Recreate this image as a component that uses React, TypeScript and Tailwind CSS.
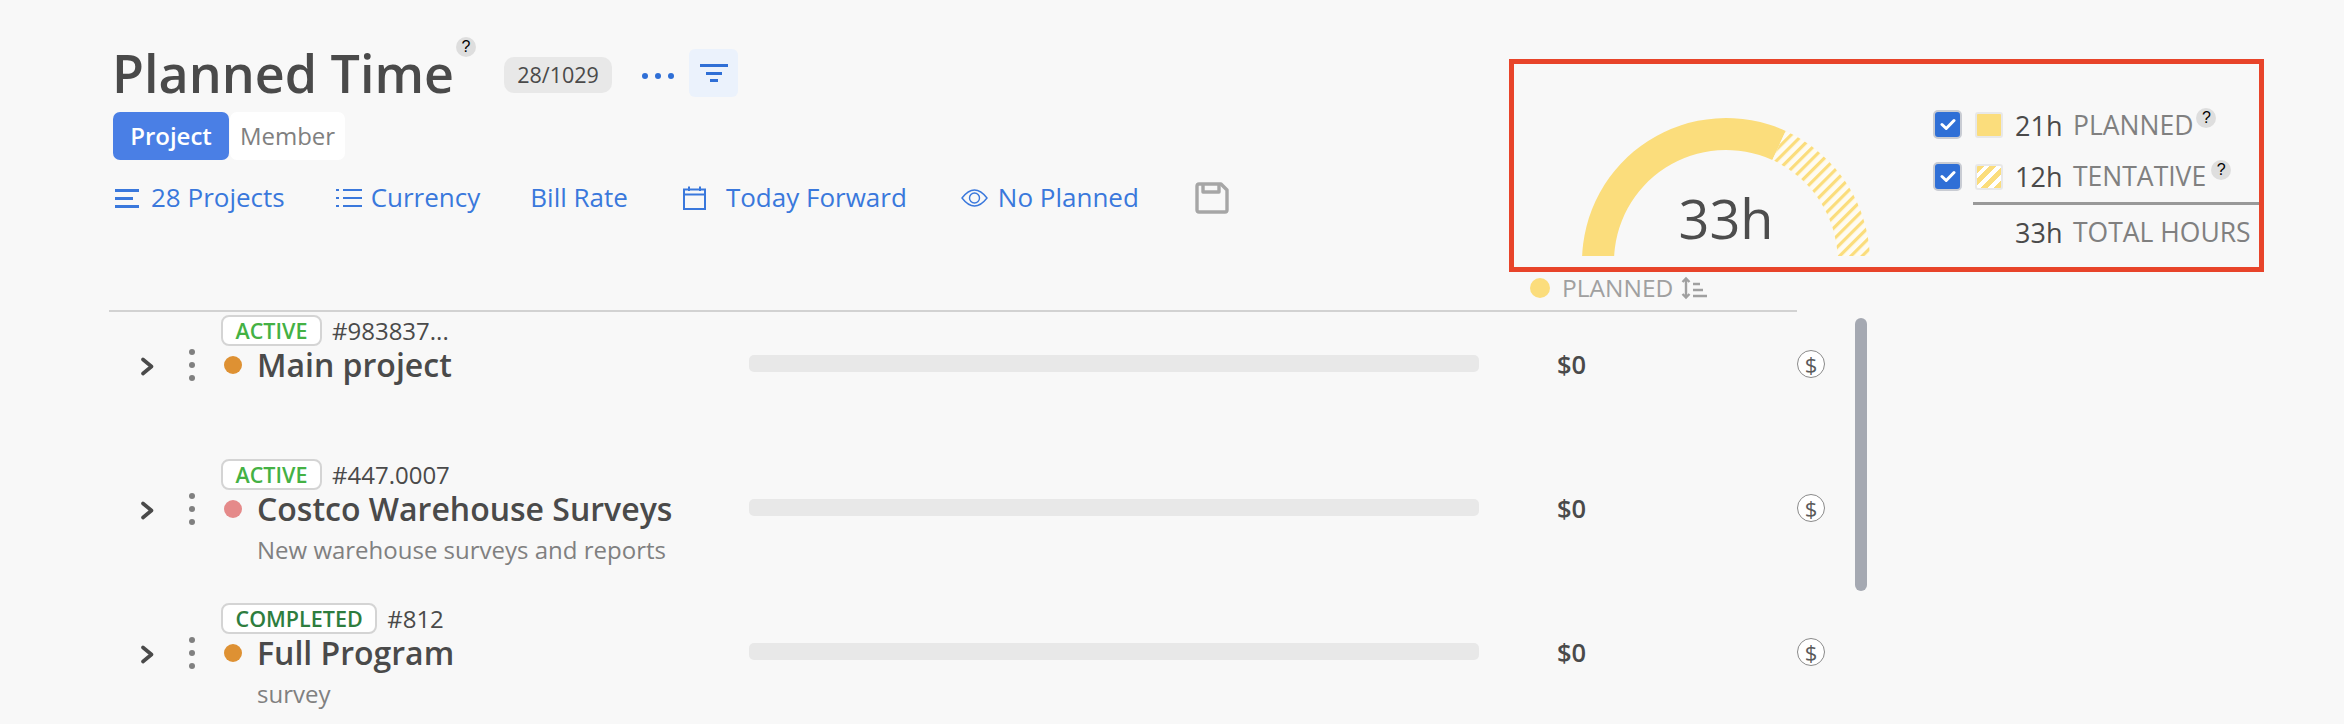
import React from "react";

const F = { fontFamily: '"Open Sans", "Noto Sans", sans-serif' };

function Help({ className = "" }: { className?: string }) {
  return (
    <span className={`flex h-[20px] w-[20px] items-center justify-center rounded-full bg-[#dedede] text-[16px] font-medium leading-none text-black ${className}`} style={{ fontFamily: '"Liberation Sans", sans-serif' }}>
      ?
    </span>
  );
}

function Check() {
  return (
    <span className="flex h-[29px] w-[29px] shrink-0 items-center justify-center rounded-[5px] border-2 border-[#c9ccd3] bg-[#2f6fd6]">
      <svg width="16" height="13" viewBox="0 0 16 13" fill="none">
        <path d="M2 6.5 L6.2 10.5 L14 2.5" stroke="#fff" strokeWidth="3" strokeLinecap="round" strokeLinejoin="round" />
      </svg>
    </span>
  );
}

function Filter({ icon, text, ml }: { icon?: React.ReactNode; text: string; ml: string }) {
  return (
    <div className={`flex items-center ${ml}`}>
      {icon}
      <span className="mt-[-2px] text-[26px] leading-[34px] text-[#3a78dc]">{text}</span>
    </div>
  );
}

function Gauge() {
  return (
    <div className="relative h-[203px] w-[368px] shrink-0">
      <svg width="368" height="203" viewBox="4 1 368 203">
        <defs>
          <pattern id="hatch" width="8" height="8" patternUnits="userSpaceOnUse" patternTransform="rotate(45)">
            <rect width="8" height="8" fill="#fefbf2" />
            <rect width="3.2" height="8" fill="#fbdd7c" />
          </pattern>
          <clipPath id="base">
            <rect x="0" y="0" width="372" height="193" />
          </clipPath>
        </defs>
        <g clipPath="url(#base)">
          <path d="M72 199 A144 144 0 0 1 275.7 68 L262.4 97.1 A112 112 0 0 0 104 199 Z" fill="#fbdd7c" />
          <path d="M275.7 68 A144 144 0 0 1 360 199 L328 199 A112 112 0 0 0 262.4 97.1 Z" fill="url(#hatch)" />
        </g>
      </svg>
      <span className="absolute left-[212px] top-[125px] -translate-x-1/2 text-[54px] leading-[58px] text-[#4d4d4d]">33h</span>
    </div>
  );
}

function Row({ badge, badgeColor, num, title, desc, dot }: { badge: string; badgeColor: string; num: string; title: string; desc?: string; dot: string }) {
  return (
    <div className="flex h-[144px] shrink-0 items-start pl-[140px] pt-[2px]">
      <svg className="mt-[43px] shrink-0" width="15" height="19" viewBox="0 0 15 19" fill="none">
        <path d="M3 2.5 L11.5 9.5 L3 16.5" stroke="#4a4a4a" strokeWidth="3.6" strokeLinecap="round" strokeLinejoin="round" />
      </svg>
      <div className="ml-[34px] mt-[35px] flex w-[6px] shrink-0 flex-col gap-[7px]">
        <span className="h-[6px] w-[6px] rounded-full bg-[#808080]" />
        <span className="h-[6px] w-[6px] rounded-full bg-[#808080]" />
        <span className="h-[6px] w-[6px] rounded-full bg-[#808080]" />
      </div>
      <div className="ml-[26px] w-[528px] shrink-0">
        <div className="flex h-[33px] items-center">
          <span className={`flex h-[31px] items-center rounded-[8px] border-2 border-[#d4d4d4] bg-white px-[12.5px] text-[21.5px] font-semibold leading-none ${badgeColor}`}>{badge}</span>
          <span className="ml-[10px] text-[24px] leading-none text-[#4a4a4a]">{num}</span>
        </div>
        <div className="flex h-[36px] items-center">
          <span className={`ml-[3px] h-[18px] w-[18px] shrink-0 rounded-full ${dot}`} />
          <span className="ml-[15px] mt-[-1px] text-[32px] font-semibold leading-[36px] text-[#4a4a4a]">{title}</span>
        </div>
        {desc && <div className="ml-[36px] mt-[9px] text-[24px] leading-[28px] text-[#808080]">{desc}</div>}
      </div>
      <div className="mt-[41px] h-[17px] w-[730px] shrink-0 rounded-[5px] bg-[#e8e8e8]" />
      <span className="ml-[78px] mt-[33px] w-[240px] shrink-0 text-[25.5px] font-semibold leading-[34px] text-[#4a4a4a]">$0</span>
      <span className="mt-[36px] flex h-[28px] w-[28px] shrink-0 items-center justify-center rounded-full border border-[#8a8a8a] bg-white text-[22px] leading-none text-[#5a5a5a]">$</span>
    </div>
  );
}

export default function App() {
  return (
    <div className="relative h-[724px] overflow-hidden bg-[#f8f8f8]" style={F}>
      <div className="flex h-[272px] items-start justify-between pl-[113px] pr-[80px]">
        <div className="pt-[37px]">
          <div className="flex h-[60px] items-start">
            <h1 className="ml-[-1px] mt-[6px] text-[52px] font-semibold leading-[60px] text-[#4a4a4a]">Planned Time</h1>
            <Help className="ml-[2px]" />
            <span className="ml-[28px] mt-[20px] flex h-[36px] w-[108px] items-center justify-center rounded-[10px] bg-[#e8e8e8] text-[21.5px] leading-none text-[#4a4a4a]">28/1029</span>
            <div className="ml-[30px] mt-[36px] flex gap-[7px]">
              <span className="h-[6px] w-[6px] rounded-full bg-[#2f6fd6]" />
              <span className="h-[6px] w-[6px] rounded-full bg-[#2f6fd6]" />
              <span className="h-[6px] w-[6px] rounded-full bg-[#2f6fd6]" />
            </div>
            <span className="ml-[15px] mt-[12px] flex h-[48px] w-[49px] items-center justify-center rounded-[6px] bg-[#ebf2fc]">
              <svg width="28" height="20" viewBox="0 0 28 20" fill="#2f6fd6">
                <rect x="0" y="1" width="28" height="3" />
                <rect x="6" y="9" width="16" height="3" />
                <rect x="10" y="16" width="8" height="3" />
              </svg>
            </span>
          </div>
          <div className="mt-[15px] flex h-[48px]">
            <span className="flex w-[116px] items-center justify-center rounded-[7px] bg-[#4a7fe5] text-[24px] font-semibold text-white">Project</span>
            <span className="ml-px flex w-[115px] items-center justify-center rounded-[7px] bg-white text-[24px] text-[#808080]">Member</span>
          </div>
          <div className="mt-[21px] flex h-[34px] items-center">
            <Filter
              ml="ml-[2px]"
              text="28 Projects"
              icon={
                <svg className="mr-[12px]" width="24" height="20" viewBox="0 0 24 20" fill="#3a78dc">
                  <rect x="0" y="1" width="24" height="3" />
                  <rect x="0" y="9" width="18" height="3" />
                  <rect x="0" y="17" width="24" height="3" />
                </svg>
              }
            />
            <Filter
              ml="ml-[51px]"
              text="Currency"
              icon={
                <svg className="mr-[9px]" width="26" height="20" viewBox="0 0 26 20" fill="#3a78dc">
                  <rect x="0" y="1" width="3" height="2" />
                  <rect x="0" y="9" width="3" height="2" />
                  <rect x="0" y="17" width="3" height="2" />
                  <rect x="7" y="1" width="19" height="2" />
                  <rect x="7" y="9" width="19" height="2" />
                  <rect x="7" y="17" width="19" height="2" />
                </svg>
              }
            />
            <Filter ml="ml-[50px]" text="Bill Rate" />
            <Filter
              ml="ml-[55px]"
              text="Today Forward"
              icon={
                <svg className="mr-[20px]" width="23" height="24" viewBox="0 0 23 24" fill="none" stroke="#3a78dc" strokeWidth="2">
                  <rect x="1" y="3.5" width="21" height="19.5" />
                  <path d="M1 8.5 H22 M6 0.5 V5 M17 0.5 V5" />
                </svg>
              }
            />
            <Filter
              ml="ml-[54px]"
              text="No Planned"
              icon={
                <svg className="mr-[10px]" width="27" height="18" viewBox="0 0 27 18" fill="none" stroke="#3a78dc" strokeWidth="1.4">
                  <path d="M1 9 C6 2.5 10 1 13.5 1 C17 1 21 2.5 26 9 C21 15.5 17 17 13.5 17 C10 17 6 15.5 1 9 Z" />
                  <circle cx="13.5" cy="9" r="5" />
                </svg>
              }
            />
            <svg className="ml-[56px]" width="34" height="32" viewBox="0 0 34 32" fill="none" stroke="#a6a6a6" strokeWidth="3.4" strokeLinejoin="round">
              <path d="M2 4 Q2 2 4 2 H26 L32 8 V28 Q32 30 30 30 H4 Q2 30 2 28 Z" />
              <path d="M8 2 V10 H24 V2" />
            </svg>
          </div>
        </div>

        <div className="mt-[59px] flex h-[213px] w-[755px] shrink-0 border-[5px] border-[#e8442a]">
          <Gauge />
          <div className="ml-[51px] flex-1 pt-[46px]">
            <div className="flex h-[29px] items-center">
              <Check />
              <span className="ml-[13px] h-[26px] w-[28px] shrink-0 rounded-[3px] border-2 border-[#e8e8e8] bg-[#fbdd7c]" />
              <span className="ml-[12px] mt-[2px] w-[58px] shrink-0 text-[27px] font-medium leading-none text-[#4a4a4a]">21h</span>
              <span className="mt-[2px] text-[26.5px] font-medium leading-none text-[#808080]">PLANNED</span>
              <Help className="mb-[14px] ml-[3px]" />
            </div>
            <div className="mt-[23px] flex h-[29px] items-center">
              <Check />
              <span className="ml-[13px] h-[26px] w-[28px] shrink-0 rounded-[3px] border-2 border-[#e8e8e8] bg-[repeating-linear-gradient(135deg,#fbdd7c_0px,#fbdd7c_5px,#ffffff_5px,#ffffff_9px)]" />
              <span className="ml-[12px] w-[58px] shrink-0 text-[27px] font-medium leading-none text-[#4a4a4a]">12h</span>
              <span className="text-[26.5px] font-medium leading-none text-[#808080]">TENTATIVE</span>
              <Help className="mb-[14px] ml-[5px]" />
            </div>
            <div className="ml-[40px] mt-[11px] h-[3px] bg-[#999999]" />
            <div className="ml-[82px] mt-[12px] flex h-[30px] items-center">
              <span className="w-[58px] shrink-0 text-[27px] font-medium leading-none text-[#4a4a4a]">33h</span>
              <span className="whitespace-nowrap text-[26.5px] font-medium leading-none text-[#808080]">TOTAL HOURS</span>
            </div>
          </div>
        </div>
      </div>

      <div className="ml-[109px] flex h-[40px] w-[1688px] items-center border-b-2 border-[#d2d2d2] pb-[6px]">
        <span className="ml-[1421px] h-[20px] w-[20px] rounded-full bg-[#fbdd7c]" />
        <span className="ml-[12px] text-[24.5px] font-medium leading-none text-[#a0a0a0]">PLANNED</span>
        <svg className="ml-[8px]" width="26" height="24" viewBox="0 0 26 24" fill="none" stroke="#a0a0a0" strokeWidth="2.4">
          <path d="M5 3 V21 M1.5 6 L5 2.5 L8.5 6 M1.5 18 L5 21.5 L8.5 18" />
          <path d="M12 8 H19 M12 14 H22 M12 20 H26" />
        </svg>
      </div>

      <div className="flex flex-col">
        <Row badge="ACTIVE" badgeColor="text-[#44b144]" num="#983837..." title="Main project" dot="bg-[#de9133]" />
        <Row badge="ACTIVE" badgeColor="text-[#44b144]" num="#447.0007" title="Costco Warehouse Surveys" desc="New warehouse surveys and reports" dot="bg-[#e58a8a]" />
        <Row badge="COMPLETED" badgeColor="text-[#2e7d3e]" num="#812" title="Full Program" desc="survey" dot="bg-[#de9133]" />
      </div>

      <div className="absolute left-[1855px] top-[318px] h-[273px] w-[12px] rounded-full bg-[#a5a9b2]" />
    </div>
  );
}
